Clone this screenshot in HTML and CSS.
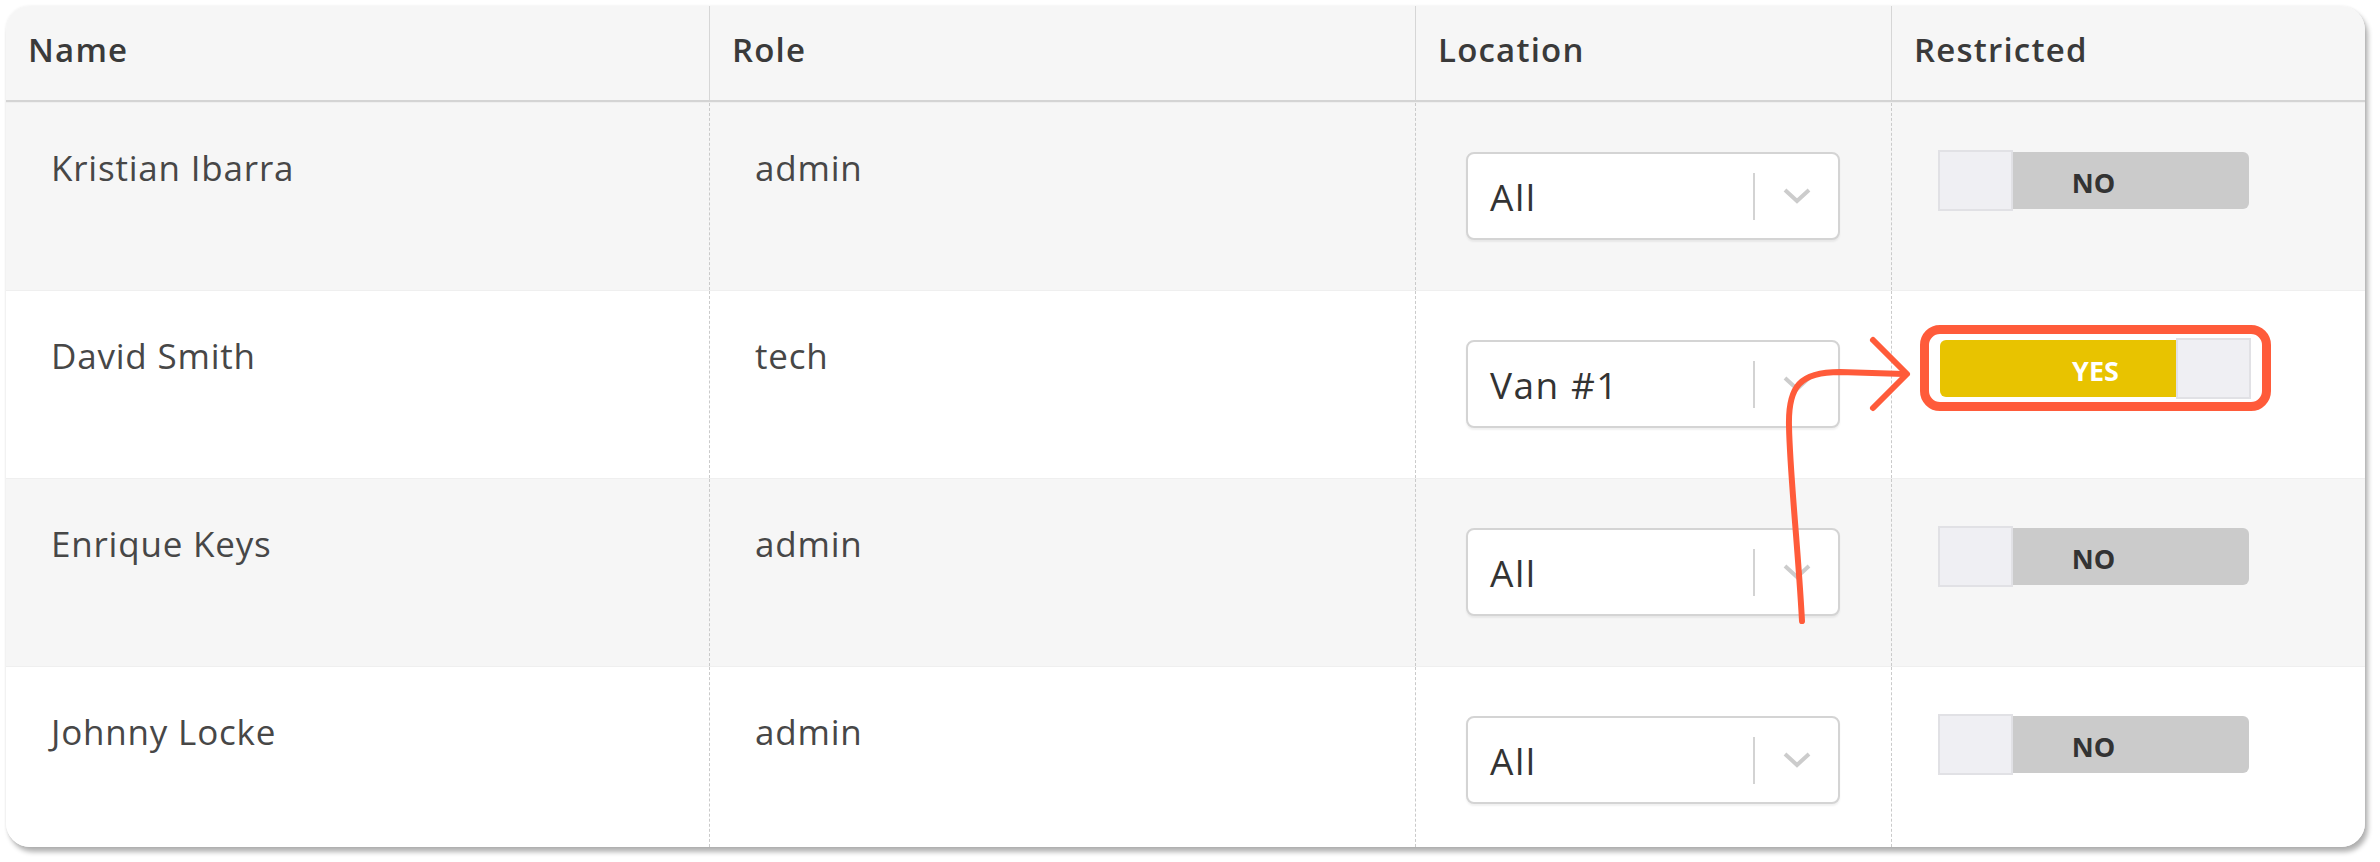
FILE: index.html
```html
<!DOCTYPE html>
<html lang="en">
<head>
    <meta charset="UTF-8">
    <meta name="viewport" content="width=device-width, initial-scale=1.0">
    <title>Users</title>
    <link rel="stylesheet" href="styles.css">
</head>
<body>
    <div class="stage">
        <div class="card">
            <div class="row head">
                <div class="cell">Name</div>
                <div class="cell">Role</div>
                <div class="cell">Location</div>
                <div class="cell">Restricted</div>
            </div>

            <div class="row shade">
                <div class="cell text">Kristian Ibarra</div>
                <div class="cell text">admin</div>
                <div class="cell">
                    <div class="select">
                        <span class="value">All</span>
                        <span class="sep"></span>
                        <span class="caret"><svg width="28" height="16" viewBox="0 0 28 16"><polyline points="2,2 14,13 26,2" fill="none" stroke="#cccccc" stroke-width="4"/></svg></span>
                    </div>
                </div>
                <div class="cell">
                    <div class="toggle off"><span class="knob"></span>NO</div>
                </div>
            </div>

            <div class="row">
                <div class="cell text">David Smith</div>
                <div class="cell text">tech</div>
                <div class="cell">
                    <div class="select">
                        <span class="value">Van #1</span>
                        <span class="sep"></span>
                        <span class="caret"><svg width="28" height="16" viewBox="0 0 28 16"><polyline points="2,2 14,13 26,2" fill="none" stroke="#cccccc" stroke-width="4"/></svg></span>
                    </div>
                </div>
                <div class="cell">
                    <div class="toggle on"><span class="knob"></span>YES<span class="highlight"></span></div>
                </div>
            </div>

            <div class="row shade">
                <div class="cell text">Enrique Keys</div>
                <div class="cell text">admin</div>
                <div class="cell">
                    <div class="select">
                        <span class="value">All</span>
                        <span class="sep"></span>
                        <span class="caret"><svg width="28" height="16" viewBox="0 0 28 16"><polyline points="2,2 14,13 26,2" fill="none" stroke="#cccccc" stroke-width="4"/></svg></span>
                    </div>
                </div>
                <div class="cell">
                    <div class="toggle off"><span class="knob"></span>NO</div>
                </div>
            </div>

            <div class="row last">
                <div class="cell text">Johnny Locke</div>
                <div class="cell text">admin</div>
                <div class="cell">
                    <div class="select">
                        <span class="value">All</span>
                        <span class="sep"></span>
                        <span class="caret"><svg width="28" height="16" viewBox="0 0 28 16"><polyline points="2,2 14,13 26,2" fill="none" stroke="#cccccc" stroke-width="4"/></svg></span>
                    </div>
                </div>
                <div class="cell">
                    <div class="toggle off"><span class="knob"></span>NO</div>
                </div>
            </div>
        </div>

        <!-- annotation arrow drawn over the table -->
        <svg class="arrow" width="2380" height="862" viewBox="0 0 2380 862">
            <path d="M1802,615 C1798,540 1790,470 1789,420 C1788,380 1800,366 1840,366 L1904,368" fill="none" stroke="#ff5b3a" stroke-width="6" stroke-linecap="round"/>
            <polyline points="1873,334 1907,368 1873,402" fill="none" stroke="#ff5b3a" stroke-width="6" stroke-linecap="round" stroke-linejoin="round"/>
        </svg>
    </div>
</body>
</html>
```

FILE: styles.css
```css
* {
    box-sizing: border-box;
}
body {
    margin: 0;
    background: #ffffff;
    font-family: "Open Sans", "Liberation Sans", sans-serif;
    color: #444;
}
.stage {
    position: relative;
    width: 2380px;
    height: 862px;
}
.card {
    display: flex;
    flex-direction: column;
    width: 2359px;
    height: 841px;
    margin: 6px 0 0 6px;
    border-radius: 24px;
    overflow: hidden;
    background: #fff;
    box-shadow: 3px 5px 5px rgba(0,0,0,0.3), 0 0 3px rgba(0,0,0,0.08);
}
.row {
    display: grid;
    grid-template-columns: 704px 706px 476px 1fr;
    height: 188px;
    background: #fff;
    border-top: 1px solid #efefef;
}
.row.shade {
    background: #f6f6f6;
}
.row.last {
    flex: 1;
}
.row.head {
    height: 96px;
    background: #f6f6f6;
    border-top: none;
    border-bottom: 2px solid #d4d4d4;
}
.cell {
    border-right: 1px dashed #cacaca;
}
.cell:last-child {
    border-right: none;
}
.head .cell {
    padding: 24px 0 0 22px;
    font-size: 33px;
    line-height: 40px;
    font-weight: 600;
    letter-spacing: 1.2px;
    color: #3a3a3a;
    border-right: 1px solid #d6d6d6;
}
.head .cell:last-child {
    border-right: none;
}
.cell.text {
    padding: 45px 0 0 45px;
    font-size: 35px;
    line-height: 40px;
    letter-spacing: 0.8px;
    color: #474747;
}
.select {
    display: flex;
    align-items: center;
    width: 374px;
    height: 88px;
    margin: 49px 0 0 50px;
    background: #fff;
    border: 2px solid #d4d4d4;
    border-radius: 8px;
    box-shadow: 0 2px 2px rgba(0,0,0,0.06);
}
.select .value {
    flex: 1;
    padding-left: 22px;
    font-size: 37px;
    letter-spacing: 1.5px;
    color: #333;
}
.select .sep {
    width: 2px;
    height: 47px;
    background: #d3d3d3;
}
.select .caret {
    display: flex;
    justify-content: center;
    width: 83px;
}
.toggle {
    position: relative;
    display: flex;
    align-items: center;
    justify-content: center;
    width: 311px;
    height: 57px;
    margin: 49px 0 0 46px;
    padding-top: 4px;
    border-radius: 6px;
    background: #cbcbcb;
    font-size: 27px;
    font-weight: 700;
    color: #333;
}
.toggle .knob {
    position: absolute;
    top: -2px;
    width: 75px;
    height: 61px;
    background: #efeff3;
    border: 2px solid #e1e1e5;
}
.toggle.off .knob {
    left: 0;
}
.toggle.on {
    margin-left: 48px;
    background: #e8c300;
    color: #fff;
}
.toggle.on .knob {
    right: 0;
}
.highlight {
    position: absolute;
    left: -20px;
    right: -20px;
    top: -15px;
    bottom: -14px;
    border: 9px solid #ff5b3a;
    border-radius: 20px;
}
.arrow {
    position: absolute;
    left: 0;
    top: 0;
    pointer-events: none;
}
```
